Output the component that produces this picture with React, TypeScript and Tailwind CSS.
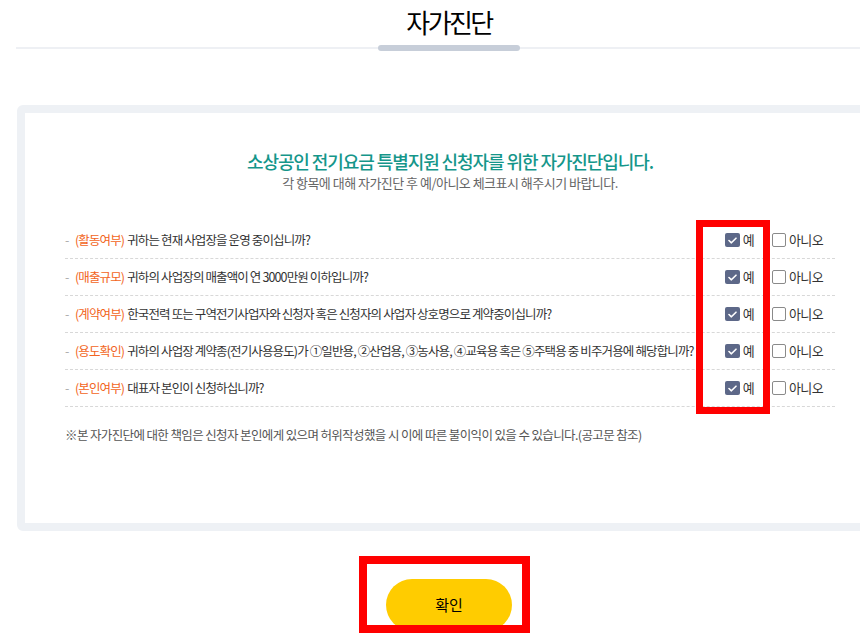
import React from "react";

const QUESTIONS = [
  { tag: "(활동여부)", text: "귀하는 현재 사업장을 운영 중이십니까?" },
  { tag: "(매출규모)", text: "귀하의 사업장의 매출액이 연 3000만원 이하입니까?" },
  { tag: "(계약여부)", text: "한국전력 또는 구역전기사업자와 신청자 혹은 신청자의 사업자 상호명으로 계약중이십니까?" },
  { tag: "(용도확인)", text: "귀하의 사업장 계약종(전기사용용도)가 ①일반용, ②산업용, ③농사용, ④교육용 혹은 ⑤주택용 중 비주거용에 해당합니까?" },
  { tag: "(본인여부)", text: "대표자 본인이 신청하십니까?" },
];

function CheckBox({ checked }: { checked: boolean }) {
  if (checked) {
    return (
      <span className="flex h-[14px] w-[15px] items-center justify-center rounded-[2px] bg-[#5d6888]">
        <svg width="9" height="7" viewBox="0 0 9 7" fill="none">
          <path d="M1 3.5 3.4 5.8 8 1.2" stroke="#fff" strokeWidth="1.6" strokeLinecap="round" strokeLinejoin="round" />
        </svg>
      </span>
    );
  }
  return <span className="h-[14px] w-[14px] rounded-[2px] border border-[#8a8a8a] bg-white" />;
}

export default function App() {
  return (
    <div className="w-full h-[638px] overflow-hidden bg-white text-[#333] font-['Noto_Sans_CJK_KR',sans-serif]">
      {/* 타이틀 */}
      <div className="relative h-[50px]">
        <h1 className="pl-[38px] pt-[4px] text-center text-[26px] font-normal leading-[36px] tracking-[-0.1em] text-black">자가진단</h1>
        <div className="absolute left-[16px] right-0 top-[47px] h-[2px] bg-[#eef0f4]" />
        <div className="absolute left-[378px] top-[45px] h-[6px] w-[142px] rounded-full bg-[#c7ced9]" />
      </div>

      {/* 카드 */}
      <div className="ml-[17px] mt-[55px] w-[866px] rounded-[6px] border-[8px] border-[#eef1f5]">
        <div className="h-[410px] bg-white px-[40px] pt-[36px]">
          <h2 className="text-center text-[18px] font-medium leading-[24px] tracking-[-0.06em] text-[#15968a]">
            소상공인 전기요금 특별지원 신청자를 위한 자가진단입니다.
          </h2>
          <p className="mt-[1px] text-center text-[13px] leading-[18px] tracking-[-0.04em] text-[#666]">
            각 항목에 대해 자가진단 후 예/아니오 체크표시 해주시기 바랍니다.
          </p>

          <div className="relative mt-[30px]">
            {QUESTIONS.map((q) => (
              <div key={q.tag} className="flex h-[37px] items-center justify-between border-b border-dashed border-[#d8d8d8] pr-[12px]">
                <div className="flex items-center text-[12.5px] tracking-[-0.07em]">
                  <span className="w-[10px] text-[#aaa]">-</span>
                  <span className="text-[#f26522]">{q.tag}</span>
                  <span className="ml-[3px] text-[#333]">{q.text}</span>
                </div>
                <div className="flex items-center text-[13px] tracking-[-0.05em] text-[#333]">
                  <label className="flex items-center gap-[3px]">
                    <CheckBox checked />
                    <span>예</span>
                  </label>
                  <label className="ml-[18px] flex items-center gap-[3px]">
                    <CheckBox checked={false} />
                    <span>아니오</span>
                  </label>
                </div>
              </div>
            ))}
            <div className="pointer-events-none absolute left-[631px] top-[-2px] h-[194px] w-[74px] border-[7px] border-[#ff0000]" />
          </div>

          <p className="mt-[20px] text-[12.5px] leading-[16px] tracking-[-0.05em] text-[#555]">
            ※본 자가진단에 대한 책임은 신청자 본인에게 있으며 허위작성했을 시 이에 따른 불이익이 있을 수 있습니다.(공고문 참조)
          </p>
        </div>
      </div>

      {/* 확인 버튼 */}
      <div className="relative mt-[48px] flex justify-center">
        <button className="ml-[38px] h-[52px] w-[126px] rounded-full bg-[#ffcc00] text-[15px] text-black">확인</button>
        <div className="pointer-events-none absolute left-[359px] top-[-23px] h-[77px] w-[171px] border-[8px] border-[#ff0000]" />
      </div>
    </div>
  );
}
